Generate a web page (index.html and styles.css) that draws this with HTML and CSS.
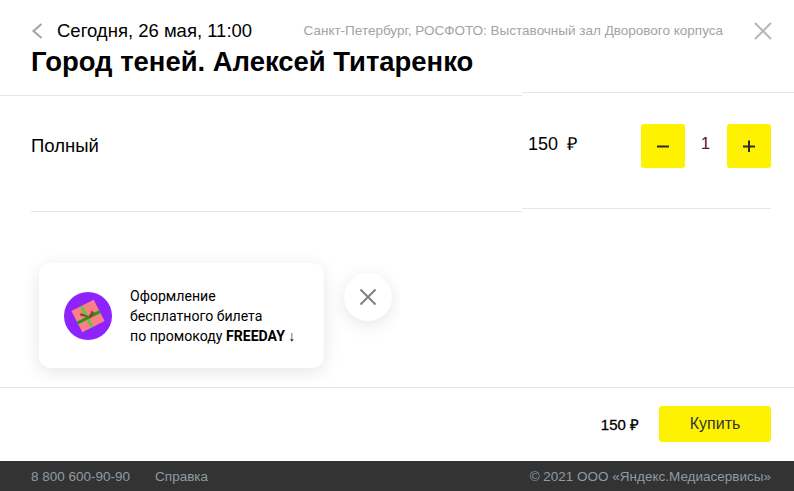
FILE: index.html
```html
<!DOCTYPE html>
<html lang="ru">
<head>
<meta charset="utf-8">
<title>Город теней. Алексей Титаренко</title>
<link rel="stylesheet" href="styles.css">
</head>
<body>
<div class="page">
  <main class="main">
    <header class="header">
      <div class="header-top">
        <svg class="back" width="12" height="16" viewBox="0 0 12 16"><path d="M10.5 1 L2.5 8 L10.5 15" fill="none" stroke="#a3a3a3" stroke-width="2"/></svg>
        <span class="date">Сегодня, 26 мая, 11:00</span>
        <span class="place">Санкт-Петербург, РОСФОТО: Выставочный зал Дворового корпуса</span>
        <svg class="close" width="18" height="18" viewBox="0 0 18 18"><path d="M1 1 L17 17 M17 1 L1 17" fill="none" stroke="#b8b8b8" stroke-width="2"/></svg>
      </div>
      <h1 class="title">Город теней. Алексей Титаренко</h1>
    </header>
    <div class="columns">
      <div class="col-left">
        <div class="row-left"><span class="tariff">Полный</span></div>
        <div class="promo">
          <div class="promo-card">
            <svg class="gift" width="48" height="48" viewBox="0 0 48 48">
              <circle cx="24" cy="24" r="24" fill="#8f23fb"/>
              <g transform="rotate(-27 24 24)">
                <rect x="11.5" y="12" width="25" height="24" fill="#fb7f86"/>
                <rect x="21" y="12" width="3" height="24" fill="#5cc83e"/>
                <rect x="11.5" y="24" width="25" height="3" fill="#1f9a18"/>
                <path d="M23 25 L17 20 L19 18 L24 24 Z M24 25 L30 21 L31 24 L25 27 Z" fill="#8f3f22"/>
              </g>
            </svg>
            <p class="promo-text">Оформление<br>бесплатного билета<br>по промокоду <b>FREEDAY</b> ↓</p>
          </div>
          <button class="promo-close" type="button" aria-label="Закрыть">
            <svg width="18" height="18" viewBox="0 0 18 18"><path d="M1.5 1.5 L16.5 16.5 M16.5 1.5 L1.5 16.5" fill="none" stroke="#808080" stroke-width="2"/></svg>
          </button>
        </div>
      </div>
      <div class="col-right">
        <div class="row-right">
          <span class="price">150&nbsp; ₽</span>
          <div class="counter">
            <button class="step" type="button" aria-label="Меньше"><svg width="12" height="12" viewBox="0 0 12 12"><path d="M0 6.5 H12" stroke="#2b2b2b" stroke-width="2"/></svg></button>
            <span class="count">1</span>
            <button class="step" type="button" aria-label="Больше"><svg width="12" height="12" viewBox="0 0 12 12"><path d="M0 6.5 H12 M6 0.5 V12.5" stroke="#2b2b2b" stroke-width="2"/></svg></button>
          </div>
        </div>
      </div>
    </div>
  </main>
  <section class="buy">
    <span class="total">150 ₽</span>
    <button class="buy-btn" type="button">Купить</button>
  </section>
  <footer class="footer">
    <div class="footer-links"><span>8 800 600-90-90</span><span>Справка</span></div>
    <span>© 2021 ООО «Яндекс.Медиасервисы»</span>
  </footer>
</div>
</body>
</html>
```
FILE: styles.css
```css
* { box-sizing: border-box; }
html, body { margin: 0; height: 100%; background: #fff; overflow: hidden; }
body { font-family: "Liberation Sans", Arial, sans-serif; color: #000; }
.page { width: 794px; height: 491px; display: flex; flex-direction: column; }
.main { height: 388px; border-bottom: 1px solid #e6e6e6; display: flex; flex-direction: column; }
.header { height: 92px; padding: 20px 22px 0 31px; }
.header-top { display: flex; align-items: center; height: 22px; }
.back { margin-right: 14px; flex: none; }
.date { font-size: 18.5px; line-height: 22px; }
.place { margin-left: auto; font-size: 13.5px; line-height: 22px; color: #a3a3a3; }
.close { margin-left: 31px; flex: none; }
.title { margin: 3px 0 0; font-size: 27.45px; line-height: 34px; font-weight: 700; }
.columns { display: flex; flex: 1; min-height: 0; }
.col-left { width: 522px; margin-top: 3px; border-top: 1px solid #e6e6e6; flex: none; }
.row-left { height: 116px; margin-left: 31px; border-bottom: 1px solid #e6e6e6; display: flex; align-items: center; padding-bottom: 16px; }
.tariff { font-size: 18.5px; line-height: 22px; }
.promo { width: 400px; height: 150px; margin-top: 20px; padding: 31px 0 0 39px; display: flex; align-items: flex-start; gap: 20px; overflow: hidden; }
.promo-card { width: 285px; height: 105px; flex: none; background: #fff; border-radius: 12px; box-shadow: 0 4px 18px rgba(0,0,0,.1); display: flex; align-items: center; padding-left: 25px; gap: 18px; }
.gift { flex: none; }
.promo-text { margin: 1px 0 0; font-family: Roboto, sans-serif; font-size: 14.1px; line-height: 20px; color: #000; }
.promo-close { width: 48px; height: 48px; margin-top: 10px; flex: none; padding: 0; border: 0; border-radius: 50%; background: #fff; box-shadow: 0 4px 18px rgba(0,0,0,.1); display: flex; align-items: center; justify-content: center; }
.col-right { flex: 1; border-top: 1px solid #e6e6e6; }
.row-right { width: 249px; height: 116px; border-bottom: 1px solid #e6e6e6; display: flex; align-items: flex-start; padding: 31px 0 0 6px; }
.price { font-size: 18px; line-height: 22px; margin-top: 9px; word-spacing: -.5px; }
.counter { margin-left: auto; display: flex; align-items: flex-start; }
.step { width: 44px; height: 44px; padding: 0; border: 0; border-radius: 3px; background: #fff200; display: flex; align-items: center; justify-content: center; }
.count { width: 42px; padding-right: 1px; text-align: center; font-size: 17px; line-height: 20px; margin-top: 10px; color: #5a2020; }
.buy { height: 73px; padding: 0 23px 0 0; display: flex; align-items: flex-start; justify-content: flex-end; }
.total { font-size: 15px; font-weight: 400; line-height: 18px; margin: 28px 20px 0 0; -webkit-text-stroke: .3px #000; }
.buy-btn { width: 112px; height: 36px; margin-top: 18px; padding: 0; border: 0; border-radius: 3px; background: #fff200; color: #333; font-family: "Liberation Sans", Arial, sans-serif; font-size: 16px; }
.footer { height: 30px; background: #333; color: #8f9ba3; font-size: 13.5px; padding: 0 23px 0 31px; display: flex; align-items: center; justify-content: space-between; }
.footer-links { display: flex; gap: 25px; }
```
